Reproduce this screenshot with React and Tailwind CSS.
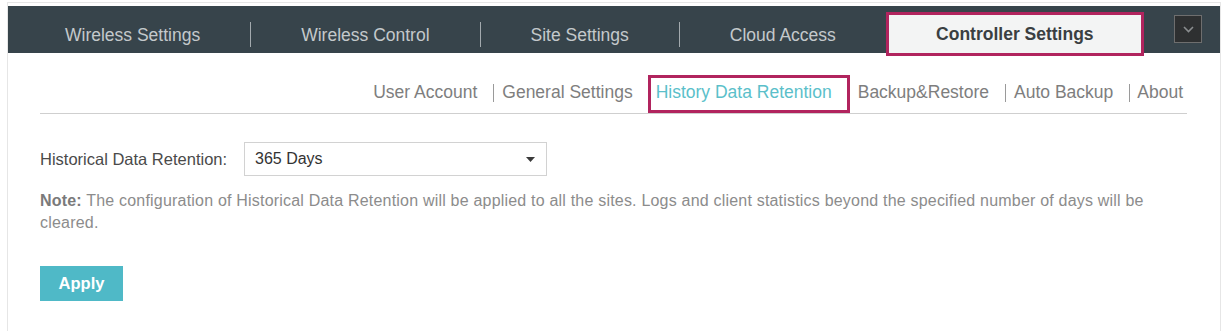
import React from 'react';

const tabs = ['Wireless Settings', 'Wireless Control', 'Site Settings', 'Cloud Access'];

export default function App() {
  return (
    <div className="w-[1223px] h-[331px] overflow-hidden bg-white pt-[2px] pl-[7px] pr-[2px] font-['Liberation_Sans',Arial,sans-serif]">
      <div className="h-full border-x border-t border-[#e6e6e6] pt-[3px]">
        {/* top navigation */}
        <div className="flex h-[47px] items-start bg-[#37444b] pl-[57px]">
          {tabs.map((t, i) => (
            <React.Fragment key={t}>
              <span className="whitespace-nowrap pt-[19px] text-[17.5px] leading-[20px] text-[#c4c9cb]">{t}</span>
              {i < tabs.length - 1 && <span className="mx-[50px] mt-[16px] h-[25px] w-px bg-[#a3aaae]" />}
            </React.Fragment>
          ))}
          <div className="relative z-10 ml-[50px] mt-[6px] flex h-[44px] w-[258px] items-center justify-center border-[3px] border-[#b1245e] bg-[#f3f4f4]">
            <span className="whitespace-nowrap pt-[1px] text-[17.5px] font-bold text-[#3a3f42]">Controller Settings</span>
          </div>
          <div className="ml-auto mr-[18px] mt-[9px] flex h-[28px] w-[28px] items-center justify-center border border-[#6e6e6e] bg-[#2e3031]">
            <svg width="11" height="7" viewBox="0 0 11 7" fill="none">
              <path d="M1 1l4.5 4.5L10 1" stroke="#8a8d8f" strokeWidth="1.6" />
            </svg>
          </div>
        </div>

        {/* sub navigation */}
        <div className="ml-[32px] mr-[33px] mt-[22px] flex h-[39px] items-start justify-end border-b border-[#cfcfcf] text-[17.5px] leading-[20px] text-[#7e7e7e]">
          <span className="whitespace-nowrap pt-[7px]">User Account</span>
          <span className="ml-[16px] mr-[8px] mt-[9px] h-[18px] w-px bg-[#9a9a9a]" />
          <span className="whitespace-nowrap pt-[7px]">General Settings</span>
          <div className="ml-[15px] h-[38px] border-[3px] border-[#b1245e] pl-[5px] pr-[15px]">
            <span className="block whitespace-nowrap pt-[4px] text-[#5bbfca]">History Data Retention</span>
          </div>
          <span className="ml-[8px] whitespace-nowrap pt-[7px]">Backup&amp;Restore</span>
          <span className="ml-[16px] mr-[8px] mt-[9px] h-[18px] w-px bg-[#9a9a9a]" />
          <span className="whitespace-nowrap pt-[7px]">Auto Backup</span>
          <span className="ml-[16px] mr-[7px] mt-[9px] h-[18px] w-px bg-[#9a9a9a]" />
          <span className="mr-[4px] whitespace-nowrap pt-[7px]">About</span>
        </div>

        {/* content */}
        <div className="pl-[32px] pr-[33px]">
          <div className="mt-[28px] flex items-center">
            <span className="w-[204px] whitespace-nowrap text-[16.5px] text-[#4a4a4a]">Historical Data Retention:</span>
            <div className="flex h-[34px] w-[303px] items-center justify-between border border-[#d2d2d2] pl-[10px] pr-[11px]">
              <span className="text-[16px] text-[#333]">365 Days</span>
              <svg width="9" height="5" viewBox="0 0 9 5">
                <path d="M0 0h9L4.5 5z" fill="#3a3a3a" />
              </svg>
            </div>
          </div>

          <p className="mt-[14px] text-[16px] leading-[22px] tracking-[0.2px] text-[#8c8c8c]">
            <span className="font-bold text-[#7a7a7a]">Note:</span> The configuration of Historical Data Retention will be applied to all the sites. Logs and client statistics beyond the specified number of days will be cleared.
          </p>

          <button className="mt-[32px] flex h-[35px] w-[83px] items-center justify-center bg-[#4fb9c7] text-[16.5px] font-semibold text-white">
            Apply
          </button>
        </div>
      </div>
    </div>
  );
}
